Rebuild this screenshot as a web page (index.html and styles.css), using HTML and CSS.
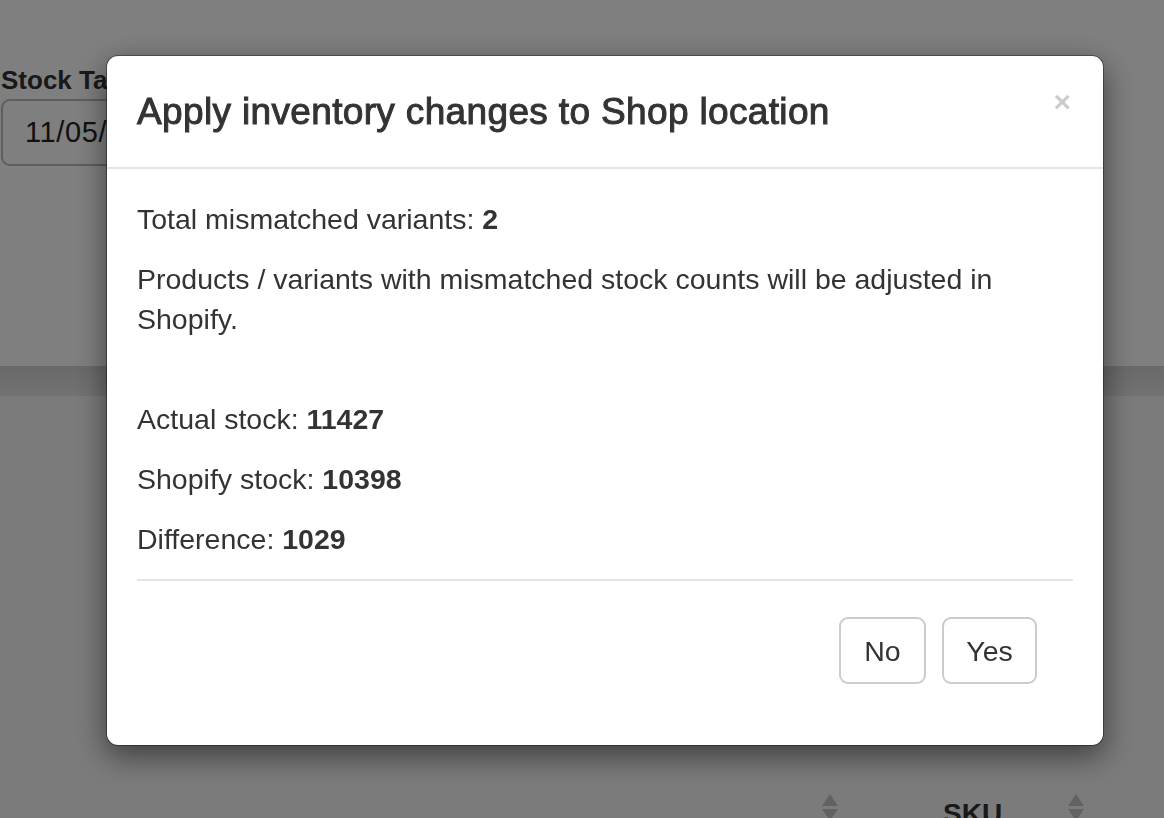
FILE: index.html
```html
<!DOCTYPE html>
<html lang="en">
<head>
<meta charset="utf-8">
<title>Apply inventory changes</title>
<link rel="stylesheet" href="styles.css">
</head>
<body>
<div class="page">
  <section class="top-panel">
    <label class="field-label">Stock Take Date</label>
    <div class="date-input">11/05/2021</div>
  </section>
  <div class="band"></div>
  <section class="table-area">
    <div class="table-head">
      <div class="th th-first"><span class="sort"><span class="tri-up"></span><span class="tri-down"></span></span></div>
      <div class="th th-sku">SKU <span class="sort"><span class="tri-up"></span><span class="tri-down"></span></span></div>
    </div>
  </section>
</div>

<div class="backdrop"></div>

<div class="modal">
  <div class="modal-header">
    <h4 class="modal-title">Apply inventory changes to Shop location</h4>
    <span class="close">&times;</span>
  </div>
  <div class="modal-body">
    <p>Total mismatched variants: <b>2</b></p>
    <p>Products / variants with mismatched stock counts will be adjusted in Shopify.<br>&nbsp;</p>
    <p>Actual stock: <b>11427</b></p>
    <p>Shopify stock: <b>10398</b></p>
    <p>Difference: <b>1029</b></p>
    <hr class="divider">
    <div class="actions">
      <button class="btn btn-no">No</button>
      <button class="btn btn-yes">Yes</button>
    </div>
  </div>
</div>
</body>
</html>
```
FILE: styles.css
```css
html, body {
  margin: 0;
  padding: 0;
  height: 100%;
  overflow: hidden;
}
body {
  font-family: "Liberation Sans", Arial, sans-serif;
  color: #333;
  background: #f6f6f6;
}
.page {
  display: flex;
  flex-direction: column;
  height: 100%;
}
.top-panel {
  flex-shrink: 0;
  background: #fff;
  height: 366px;
  display: flex;
  flex-direction: column;
  padding-top: 64px;
  box-sizing: border-box;
}
.field-label {
  font-weight: bold;
  font-size: 26px;
  line-height: 32px;
  color: #333;
  padding-left: 1px;
}
.date-input {
  margin-top: 3px;
  width: 320px;
  height: 67px;
  box-sizing: border-box;
  border: 2px solid #bcbcbc;
  border-radius: 9px;
  font-size: 29px;
  line-height: 63px;
  padding-left: 22px;
  color: #222;
  letter-spacing: 0.6px;
  margin-left: 1px;
}
.band {
  flex-shrink: 0;
  height: 30px;
  background: linear-gradient(#d4d4d4, #e4e4e4);
}
.table-area {
  flex-shrink: 0;
  background: #f6f6f6;
  padding-top: 402px;
}
.table-head {
  display: flex;
  padding-left: 822px;
}
.th {
  font-weight: bold;
  font-size: 28px;
  color: #333;
  display: flex;
  align-items: flex-start;
}
.th-first {
  width: 121px;
}
.th-sku {
  gap: 66px;
}
.sort {
  display: flex;
  flex-direction: column;
  gap: 3px;
  margin-top: -4px;
}
.tri-up {
  width: 0;
  height: 0;
  border-left: 8px solid transparent;
  border-right: 8px solid transparent;
  border-bottom: 12px solid #c4c4c4;
}
.tri-down {
  width: 0;
  height: 0;
  border-left: 8px solid transparent;
  border-right: 8px solid transparent;
  border-top: 12px solid #c4c4c4;
}
.backdrop {
  position: fixed;
  inset: 0;
  background: rgba(0, 0, 0, 0.5);
}
.modal {
  position: fixed;
  left: 106px;
  top: 55px;
  width: 998px;
  box-sizing: border-box;
  background: #fff;
  border: 1px solid rgba(0, 0, 0, 0.35);
  border-radius: 12px;
  box-shadow: 0 10px 30px rgba(0, 0, 0, 0.5);
  background-clip: padding-box;
}
.modal-header {
  display: flex;
  justify-content: space-between;
  align-items: flex-start;
  padding: 30px 30px 30px 30px;
  border-bottom: 2px solid #e5e5e5;
}
.modal-title {
  margin: 0;
  font-size: 37px;
  line-height: 51px;
  font-weight: normal;
  -webkit-text-stroke: 1px #333;
  color: #333;
  letter-spacing: 0.35px;
}
.close {
  font-size: 30px;
  font-weight: bold;
  line-height: 1;
  color: #000;
  opacity: 0.2;
  margin-top: 1px;
  margin-right: 2px;
}
.modal-body {
  padding: 30px 30px 61px 30px;
  font-size: 28.5px;
  line-height: 40px;
}
.modal-body p {
  margin: 0 0 20px;
}
.modal-body b {
  font-weight: bold;
}
.divider {
  margin: 0;
  border: 0;
  border-top: 2px solid #e5e5e5;
}
.actions {
  display: flex;
  justify-content: flex-end;
  gap: 16px;
  margin-top: 36px;
  padding-right: 36px;
}
.btn {
  font-family: "Liberation Sans", Arial, sans-serif;
  font-size: 28.5px;
  line-height: 40px;
  color: #333;
  background: #fff;
  border: 2px solid #ccc;
  border-radius: 9px;
  padding: 0;
  height: 67px;
  box-sizing: border-box;
  text-align: center;
}
.btn-no {
  width: 87px;
}
.btn-yes {
  width: 95px;
}
```
